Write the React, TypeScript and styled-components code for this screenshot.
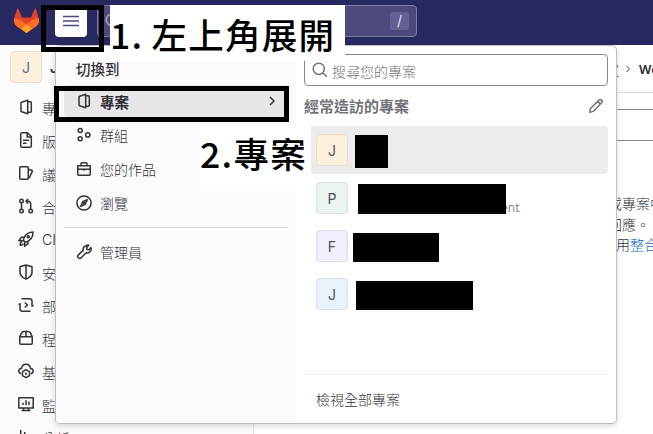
import React from "react";
import styled, { createGlobalStyle, css } from "styled-components";

const Global = createGlobalStyle`
  * { box-sizing: border-box; }
  body {
    margin: 0;
    overflow: hidden;
    font-family: Inter, "Noto Sans CJK TC", sans-serif;
    font-size: 14px;
    color: #333238;
    background: #fff;
  }
`;

const Page = styled.div`
  position: relative;
  width: 653px;
  height: 434px;
  overflow: hidden;
  display: flex;
  flex-direction: column;
`;

const TopBar = styled.header`
  flex: none;
  height: 45px;
  background: #292961;
  display: flex;
  align-items: flex-start;
  padding: 5px 0 0 13px;
`;

const Logo = styled.svg`
  width: 27px;
  height: 27px;
  margin: 2px 15px 0 0;
`;

const MenuToggle = styled.button`
  width: 32px;
  height: 32px;
  border: 0;
  border-radius: 4px;
  background: #fff;
  padding: 8px;
  margin-right: 10px;
  color: #4a4a80;
`;

const GlobalSearch = styled.div`
  width: 320px;
  height: 32px;
  border: 1px solid #7c7aa3;
  border-radius: 4px;
  background: #4c4a7d;
  color: #a9a8c4;
  display: flex;
  align-items: center;
  justify-content: space-between;
  padding: 0 7px;
`;

const KeyHint = styled.kbd`
  width: 19px;
  height: 18px;
  border-radius: 3px;
  background: #636193;
  color: #e4e3f2;
  font: 14px/17px Inter, sans-serif;
  text-align: center;
`;

const Body = styled.div`
  flex: 1;
  display: flex;
  min-height: 0;
`;

const SideBar = styled.aside`
  width: 254px;
  flex: none;
  background: #fbfafd;
  border-right: 1px solid #e4e3e8;
  padding: 6px 0 0 10px;
  overflow: hidden;
`;

const Context = styled.div`
  display: flex;
  align-items: center;
  gap: 8px;
  height: 32px;
  margin-bottom: 7px;
  font-weight: 600;
`;

const tones = {
  orange: css`background: #fdf1dd; border-color: #ecdfca;`,
  green: css`background: #ecf4ee; border-color: #d9e2db;`,
  purple: css`background: #f1f0ff; border-color: #dedded;`,
  blue: css`background: #e9f3fc; border-color: #d7e1eb;`,
};

const Avatar = styled.span<{ $tone: keyof typeof tones; $ink?: string }>`
  flex: none;
  width: 32px;
  height: 32px;
  border: 1px solid;
  border-radius: 4px;
  ${(p) => tones[p.$tone]}
  color: ${(p) => p.$ink ?? "#535158"};
  font-size: 14px;
  font-weight: 400;
  line-height: 31px;
  text-align: center;
`;

const NavItem = styled.div`
  display: flex;
  align-items: center;
  gap: 8px;
  height: 33px;
  padding-left: 8px;
  font-weight: 300;
  white-space: nowrap;
`;

const NavText = styled.span`
  padding-top: 2px;
`;

const Glyph = styled.svg`
  flex: none;
  display: block;
  width: 16px;
  height: 16px;
  fill: none;
  stroke: currentColor;
  stroke-width: 1.5;
  stroke-linejoin: round;
`;

const Main = styled.main`
  flex: 1;
  min-width: 0;
  background: #fff;
`;

const Crumbs = styled.div`
  height: 48px;
  border-bottom: 1px solid #dcdcde;
  display: flex;
  align-items: center;
  gap: 3px;
  padding-left: 337px;
  white-space: nowrap;
  color: #333238;

  b { font-family: "Noto Sans", sans-serif; font-size: 13px; font-weight: 600; color: #28272d; margin-left: 2px; }
  span { font-weight: 300; }
  svg { width: 12px; height: 12px; color: #89888d; }
`;

const FilterBox = styled.div`
  height: 32px;
  margin: 16px 0 0 30px;
  border: 1px solid #89888d;
  border-right: 0;
`;

const Hint = styled.div`
  padding: 53px 0 0 354px;
  font-size: 14px;
  line-height: 20.5px;
  font-weight: 300;
  white-space: nowrap;

  div:last-child { padding-left: 8px; }
  a { color: #1068bf; }
`;

const Menu = styled.section`
  position: absolute;
  left: 55px;
  top: 45px;
  width: 562px;
  height: 379px;
  border: 1px solid #bfbfc3;
  border-radius: 5px;
  background: #fff;
  box-shadow: 0 2px 6px rgba(31, 30, 36, 0.16);
  display: flex;
  overflow: hidden;
`;

const Switcher = styled.nav`
  width: 240px;
  flex: none;
  background: #fbfafd;
  padding: 8px;
`;

const SwitchTitle = styled.h2`
  margin: 0;
  height: 31px;
  padding: 0 12px;
  font-size: 14.5px;
  line-height: 32px;
  font-weight: 500;
`;

const SwitchItem = styled.div<{ $active?: boolean }>`
  display: flex;
  align-items: center;
  gap: 8px;
  height: 32px;
  margin-bottom: 2px;
  padding: 0 8px 0 12px;
  border-radius: 4px;
  background: ${(p) => (p.$active ? "#e7e6e9" : "transparent")};
  font-size: ${(p) => (p.$active ? 14.5 : 14)}px;
  font-weight: ${(p) => (p.$active ? 700 : 300)};

  span { flex: 1; }
`;

const Rule = styled.hr`
  border: 0;
  height: 1px;
  margin: 8px 0;
  background: #dcdcde;
`;

const Detail = styled.div`
  flex: 1;
  display: flex;
  flex-direction: column;
  padding: 8px 8px 8px 8px;
`;

const ProjectSearch = styled.div`
  height: 32px;
  border: 1px solid #89888d;
  border-radius: 4px;
  display: flex;
  align-items: center;
  gap: 4px;
  padding: 0 7px;
  color: #737278;
  font-weight: 300;

  span { padding-top: 1px; }
`;

const DetailTitle = styled.div`
  height: 40px;
  padding-right: 4px;
  display: flex;
  align-items: center;
  justify-content: space-between;
  color: #737278;
  font-size: 15px;
  font-weight: 700;

  span { padding-bottom: 2px; }
`;

const Project = styled.div<{ $active?: boolean }>`
  display: flex;
  height: 48px;
  padding: 8px 12px;
  border-radius: 4px;
  background: ${(p) => (p.$active ? "#ececec" : "transparent")};
`;

const Redacted = styled.i<{ $x: number; $y: number; $w: number; $h: number }>`
  position: relative;
  width: ${(p) => p.$w}px;
  height: ${(p) => p.$h}px;
  margin: ${(p) => p.$y}px 0 0 ${(p) => p.$x}px;
  background: #000;
`;

const PathTail = styled.small`
  align-self: flex-end;
  margin: 0 0 -2px -5px;
  font: 12px/16px "Noto Sans", sans-serif;
  color: #89888d;
`;

const ViewAll = styled.div`
  margin-top: auto;
  height: 41px;
  border-top: 1px solid #ececef;
  padding: 9px 12px 0;
  line-height: 32px;
  font-weight: 300;
`;

const Frame = styled.div<{ $x: number; $y: number; $w: number; $h: number }>`
  position: absolute;
  left: ${(p) => p.$x}px;
  top: ${(p) => p.$y}px;
  width: ${(p) => p.$w}px;
  height: ${(p) => p.$h}px;
  border: 5px solid #000;
`;

const Note = styled.div<{ $x: number; $y: number; $w: number; $h: number; $line: number; $gap: number }>`
  position: absolute;
  left: ${(p) => p.$x}px;
  top: ${(p) => p.$y}px;
  width: ${(p) => p.$w}px;
  height: ${(p) => p.$h}px;
  background: #fff;
  color: #000;
  display: flex;
  gap: ${(p) => p.$gap}px;
  font-family: "Noto Sans CJK TC", sans-serif;
  font-size: 35.5px;
  font-weight: 500;
  letter-spacing: 1.3px;
  line-height: ${(p) => p.$line}px;
  white-space: nowrap;
`;

const shapes: Record<string, React.ReactNode> = {
  project: <><path d="M9.7 1.2 3.700 3.200a1 1 0 0 0-.7.9v7.800c0 .4.300.800.7.9l6 2z" /><path d="M9.7 2.7h2.600c.6 0 1 .4 1 1v8.600c0 .6-.4 1-1 1H9.700" /></>,
  doc: <><path d="M2.75 2c0-.7.5-1.25 1.2-1.25H9.5l3.8 3.8V14c0 .7-.6 1.25-1.3 1.25H4c-.7 0-1.25-.6-1.25-1.25z" /><path d="M9.2 1v4h4M5 8.3h6M5 11.3h3.5" /></>,
  issues: <><rect x="1.75" y="1.75" width="8.5" height="12.5" rx="1" /><path d="m10.3 4.2 3.3 1c.6.2.9.6.7 1.2l-3.2 6.9" /></>,
  merge: <><circle cx="3.5" cy="3" r="1.75" /><circle cx="3.5" cy="13" r="1.75" /><circle cx="12.7" cy="13" r="1.75" /><path d="M3.5 4.8v6.4M12.7 11.2V6c0-1.6-1-2.7-2.7-2.7H8M10.2 1 8 3.3l2.2 2.2" /></>,
  rocket: <><path d="M5.3 9.2C6 5.7 8.5 1.3 15 1c.1 6-3.8 9.2-7.5 10.4zM6 6.2H3.4L.9 9.7l4.4-.3M10 10.5v2.2l-3.4 2.5V11M4 11c-1.4.2-2 1.6-1.8 3.2 1.2.1 2.5-.3 3-1.5" /><circle cx="10.2" cy="5.8" r="1" /></>,
  shield: <path d="m8 1 6 1.8v5.4c0 3.2-2.6 5.4-6 6.9-3.4-1.5-6-3.7-6-6.9V2.8zM8 1v14" />,
  deploy: <><path d="M3.500 1.750h8c1.500 0 2.500 1 2.500 2.500v5.500M14 9.500l1.200-1.500M12.500 14.250h-8c-1.500 0-2.500-1-2.500-2.500V6.200M2 6.300.8 7.900" /><path d="m6.800 5.500 2.600 2.500-2.600 2.500" /></>,
  package: <path d="M1.75 6.75h12.5v6.5c0 .6-.4 1-1 1H2.75c-.6 0-1-.4-1-1zM1.8 6.7l1.7-3.500c.5-1.200 1.300-1.700 2.500-1.700h4c1.200 0 2 .5 2.500 1.700l1.700 3.500M8 1.500v5.200" />,
  cloud: <><path d="M3.2 10.8C1.7 10.5.8 9.5.8 8.1c0-1.5 1-2.6 2.6-2.7C3.8 2.9 5.6 1.2 8 1.2s4.2 1.7 4.6 4.2c1.6.1 2.6 1.2 2.6 2.7 0 1.4-.9 2.4-2.4 2.7" /><path d="m8 6.600 3.500 2v4L8 14.700l-3.500-2.100v-4z" /><circle cx="8" cy="10.7" r=".4" /></>,
  monitor: <path d="M.8 1.7h14.4v10.2H.8zM5 8.9V6.8M8 8.9V4.2M11 8.9V5.6M5.5 12v2.4M10.5 12v2.4M3.5 14.4h9" />,
  chart: <path d="M2.700 1v14h12M6.700 14V3M10.700 14V5" />,
  group: <><circle cx="4.2" cy="3.6" r="2" /><circle cx="4.2" cy="11.8" r="2" /><circle cx="11.8" cy="7.9" r="2.1" /></>,
  work: <><path d="M1.75 4.75h12.5v8.5c0 .6-.4 1-1 1H2.75c-.6 0-1-.4-1-1zM1.8 8.2h12.4M8 7.5v2.3" /><path d="M5 4.5V2.7c0-.6.4-1 1-1h4c.6 0 1 .4 1 1v1.8" /></>,
  compass: <><circle cx="8" cy="8" r="7.1" /><path d="m11.3 4.7-2 4.6-4.6 2 2-4.6z" /><circle cx="8" cy="8" r=".5" /></>,
  wrench: <path d="M9.9 1.6c1-.5 2-.6 2.9-.4l-2.2 2.2.3 2 2 .3 2.1-2.1c.4 1.9-.2 3.6-1.5 4.5-1 .8-2.3.9-3.3.6l-5 5c-.8.9-2.1.9-2.9.1-.8-.8-.8-2.1.1-2.9l4.9-4.8c-.5-1.8.6-3.6 2.6-4.500z" />,
  right: <path d="m6 4 4 4-4 4" />,
  burger: <path d="M0 3.500h16M0 8h16M0 12.500h16" />,
  search: <><circle cx="6.8" cy="6.8" r="5.6" /><path d="m10.8 10.8 4 4" /></>,
  pencil: <path d="m1.7 14.4.6-3.7 8.6-8.6c.8-.8 1.9-.8 2.7 0 .8.8.8 1.9 0 2.7L5.2 13.4zM9.7 3.4l2.7 2.7" />,
};

const Icon = ({ name }: { name: string }) => <Glyph viewBox="0 0 16 16">{shapes[name]}</Glyph>;

const navigation = [
  ["project", "專案資訊"],
  ["doc", "版本庫"],
  ["issues", "議題"],
  ["merge", "合併請求"],
  ["rocket", "CI/CD"],
  ["shield", "安全與合規"],
  ["deploy", "部署"],
  ["package", "程式庫"],
  ["cloud", "基礎設施"],
  ["monitor", "監控"],
  ["chart", "分析"],
];

export default function App() {
  return (
    <Page>
      <Global />
      <TopBar>
        <Logo viewBox="0 0 27 27">
          <path fill="#e24329" d="M5.3 2 9 10.5h9L21.7 2c.3-.6 1-.5 1.2 0l3 9.8c.8 2.8-.2 5.4-2.4 7.2L13.5 26 3.5 19C1.300 17.200.3 14.600 1.100 11.800l3-9.800c.2-.5.9-.6 1.200 0z" />
          <path fill="#fc6d26" d="M1.300 11.100c3.100.4 5.900 1.600 8.200 3.400l4 3 4-3c2.300-1.800 5.100-3 8.200-3.400.9 3.100 0 5.900-2.200 7.900L13.500 26 3.500 19c-2.200-2-3.100-4.800-2.200-7.900z" />
          <path fill="#fca326" d="m8.300 21.600 5.200-4.100 5.200 4.100-4 3.600c-.8.600-1.600.600-2.400 0z" />
        </Logo>
        <MenuToggle aria-label="選單"><Icon name="burger" /></MenuToggle>
        <GlobalSearch><Icon name="search" /><KeyHint>/</KeyHint></GlobalSearch>
      </TopBar>

      <Body>
        <SideBar>
          <Context><Avatar $tone="orange" $ink="#4d7187">J</Avatar>J</Context>
          {navigation.map(([icon, label]) => (
            <NavItem key={icon}><Icon name={icon} /><NavText>{label}</NavText></NavItem>
          ))}
        </SideBar>
        <Main>
          <Crumbs><span>設定</span><Icon name="right" /><b>We</b></Crumbs>
          <FilterBox />
          <Hint>
            <div>或專案中</div>
            <div>回應。</div>
            <div>用<a>整合</a></div>
          </Hint>
        </Main>
      </Body>

      <Menu>
        <Switcher>
          <SwitchTitle>切換到</SwitchTitle>
          <SwitchItem $active><Icon name="project" /><span>專案</span><Icon name="right" /></SwitchItem>
          <SwitchItem><Icon name="group" /><span>群組</span></SwitchItem>
          <SwitchItem><Icon name="work" /><span>您的作品</span></SwitchItem>
          <SwitchItem><Icon name="compass" /><span>瀏覽</span></SwitchItem>
          <Rule />
          <SwitchItem><Icon name="wrench" /><span>管理員</span></SwitchItem>
        </Switcher>
        <Detail>
          <ProjectSearch><Icon name="search" /><span>搜尋您的專案</span></ProjectSearch>
          <DetailTitle><span>經常造訪的專案</span><Icon name="pencil" /></DetailTitle>
          <Project $active><Avatar $tone="orange">J</Avatar><Redacted $x={7} $y={1} $w={33} $h={33} /></Project>
          <Project><Avatar $tone="green">P</Avatar><Redacted $x={10} $y={2} $w={148} $h={30} /><PathTail>ent</PathTail></Project>
          <Project><Avatar $tone="purple">F</Avatar><Redacted $x={5} $y={3} $w={86} $h={29} /></Project>
          <Project><Avatar $tone="blue">J</Avatar><Redacted $x={8} $y={3} $w={117} $h={29} /></Project>
          <ViewAll>檢視全部專案</ViewAll>
        </Detail>
      </Menu>

      <Note $x={110} $y={5} $w={235} $h={56} $line={57} $gap={8}><span>1.</span><span>左上角展開</span></Note>
      <Note $x={200} $y={124} $w={111} $h={66} $line={58} $gap={0}><span>2.</span><span>專案</span></Note>
      <Frame $x={41} $y={5} $w={63} $h={47} />
      <Frame $x={54} $y={86} $w={235} $h={36} />
    </Page>
  );
}
